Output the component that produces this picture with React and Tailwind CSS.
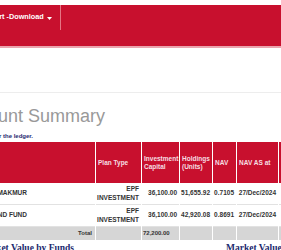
const rows = [
  { fund: "PUBLIC ISLAMIC MAKMUR", capital: "36,100.00", units: "51,655.92", nav: "0.7105", date: "27/Dec/2024", value: "36,701.53" },
  { fund: "PUBLIC ISLAMIC BOND FUND", capital: "36,100.00", units: "42,920.08", nav: "0.8691", date: "27/Dec/2024", value: "37,301.84" },
];

const cols = "grid grid-cols-[155px_45px_37px_32px_23px_41px_80px] gap-x-px";

function HeadCell({ children }) {
  return (
    <div className="flex h-[41px] items-center bg-[#c8102e] pl-[2px] text-[6.5px] leading-[8px] font-bold text-[#f6dfe2]">
      <span>{children}</span>
    </div>
  );
}

function Cell({ children, className = "" }) {
  return (
    <div className={`flex h-[22px] items-center justify-end border-b border-[#e2e2e2] pr-[2px] text-right text-[6.5px] leading-[8.5px] font-bold whitespace-nowrap text-[#333] ${className}`}>
      <span>{children}</span>
    </div>
  );
}

export default function App() {
  return (
    <div className="h-[250px] w-[281px] overflow-hidden bg-white font-['Liberation_Sans',Arial,sans-serif]">
      <nav className="h-[43px] border-b-2 border-[#eaa4ae] bg-[#c8102e]">
        <div className="-ml-[19px] mt-[5px] flex h-[25px] w-[80px] items-center gap-[3px] border-r border-[#e57584] text-[7.3px] font-bold whitespace-nowrap text-white">
          Report -Download
          <svg width="5" height="3" viewBox="0 0 5 3" className="mt-px">
            <path d="M0 0h5L2.5 3z" fill="#fff" />
          </svg>
        </div>
      </nav>

      <div className="mt-[44px] border-t border-[#ededed]" />

      <h1 className="-ml-[100px] mt-[12px] w-[205px] text-right text-[18px] leading-[22px] font-normal whitespace-nowrap text-[#999]">
        Account Summary
      </h1>
      <p className="-ml-[200px] mt-[5px] w-[233px] text-right text-[6px] leading-[8px] font-bold whitespace-nowrap text-[#1f2a70]">
        Click on the fund name for the ledger.
      </p>

      <div className={`-ml-[60px] mt-[2px] w-[440px] bg-white ${cols}`}>
        <HeadCell>Fund Name</HeadCell>
        <HeadCell>Plan Type</HeadCell>
        <HeadCell>Investment Capital</HeadCell>
        <HeadCell>Holdings (Units)</HeadCell>
        <HeadCell>NAV</HeadCell>
        <HeadCell>NAV AS at</HeadCell>
        <HeadCell>Market Value (RM)</HeadCell>

        {rows.map((r) => (
          <div key={r.fund} className="contents">
            <Cell className="overflow-hidden pr-[68px] text-[#2b2f8f]">{r.fund}</Cell>
            <Cell>
              EPF
              <br />
              INVESTMENT
            </Cell>
            <Cell>{r.capital}</Cell>
            <Cell>{r.units}</Cell>
            <Cell>{r.nav}</Cell>
            <Cell>{r.date}</Cell>
            <Cell>{r.value}</Cell>
          </div>
        ))}

        <div className="flex h-[13px] items-center justify-end bg-[#d6d6d6] pr-[3px] text-[6px] font-bold text-[#333]">
          Total
        </div>
        <div className="h-[13px] bg-[#d6d6d6]" />
        <div className="flex h-[13px] items-center bg-[#d6d6d6] pl-px text-[6px] font-bold text-[#333]">72,200.00</div>
        <div className="h-[13px] bg-[#d6d6d6]" />
        <div className="h-[13px] bg-[#d6d6d6]" />
        <div className="h-[13px] bg-[#d6d6d6]" />
        <div className="h-[13px] bg-[#d6d6d6]" />
      </div>

      <div className="mt-[3px] flex font-['Liberation_Serif','Times_New_Roman',serif] text-[9.5px] leading-[11px] font-bold whitespace-nowrap text-[#1c2a6e]">
        <h2 className="-ml-[40px] w-[114px] shrink-0 text-right">Market Value by Funds</h2>
        <h2 className="ml-[152px] shrink-0">Market Value by Plan Type</h2>
      </div>
    </div>
  );
}
